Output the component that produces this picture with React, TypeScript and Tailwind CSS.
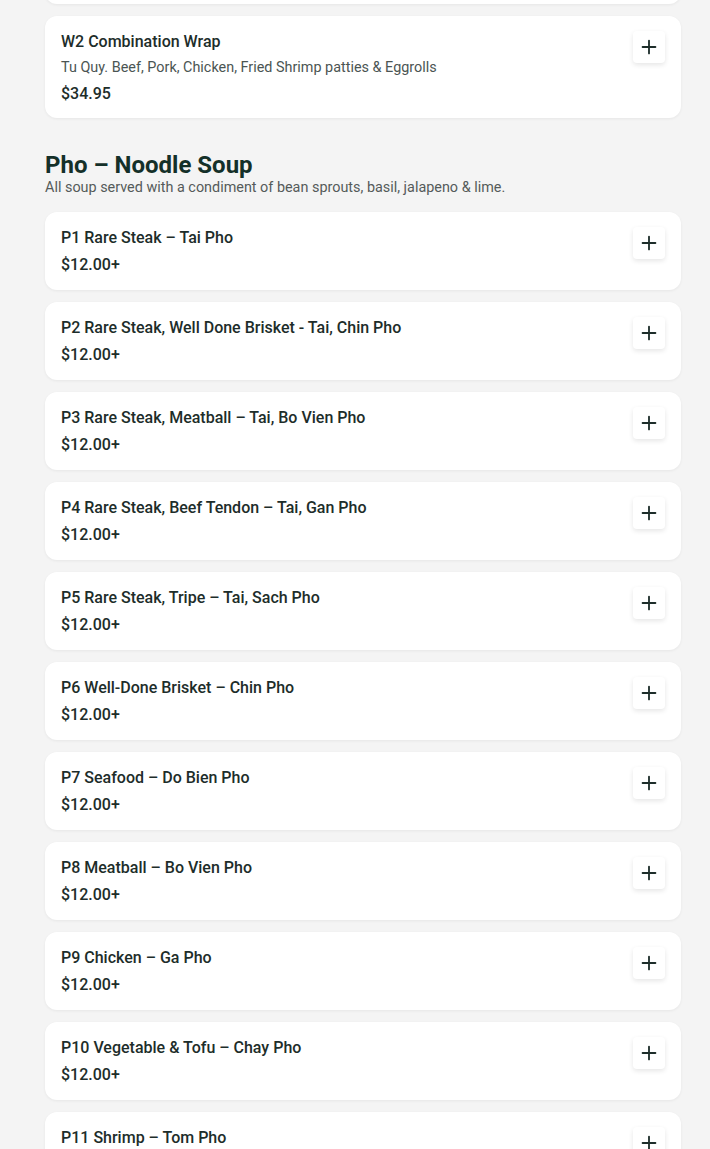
import { Plus } from 'lucide-react'

type Item = {
  name: string
  desc?: string
  price: string
}

const phoItems: Item[] = [
  { name: 'P1 Rare Steak – Tai Pho', price: '$12.00+' },
  { name: 'P2 Rare Steak, Well Done Brisket - Tai, Chin Pho', price: '$12.00+' },
  { name: 'P3 Rare Steak, Meatball – Tai, Bo Vien Pho', price: '$12.00+' },
  { name: 'P4 Rare Steak, Beef Tendon – Tai, Gan Pho', price: '$12.00+' },
  { name: 'P5 Rare Steak, Tripe – Tai, Sach Pho', price: '$12.00+' },
  { name: 'P6 Well-Done Brisket – Chin Pho', price: '$12.00+' },
  { name: 'P7 Seafood – Do Bien Pho', price: '$12.00+' },
  { name: 'P8 Meatball – Bo Vien Pho', price: '$12.00+' },
  { name: 'P9 Chicken – Ga Pho', price: '$12.00+' },
  { name: 'P10 Vegetable & Tofu – Chay Pho', price: '$12.00+' },
  { name: 'P11 Shrimp – Tom Pho', price: '$12.00+' },
]

function ItemCard({ item }: { item: Item }) {
  // cards with a description sit a touch tighter at the bottom
  const cardCls = item.desc
    ? 'flex items-start justify-between rounded-xl bg-white px-4 pt-[14px] pb-[12px] shadow-[0_1px_3px_rgba(0,0,0,0.06)]'
    : 'flex items-start justify-between rounded-xl bg-white px-4 pt-[14px] pb-[13px] shadow-[0_1px_3px_rgba(0,0,0,0.06)]'

  return (
    <div className={cardCls}>
      <div className="flex flex-col">
        <div className="text-base leading-6 font-medium text-[#1d2d2a]">{item.name}</div>
        {item.desc && (
          <div className="mt-[4px] text-[14.4px] leading-5 text-[#4b5553]">{item.desc}</div>
        )}
        <div
          className={
            item.desc
              ? 'mt-[4px] text-base leading-6 font-medium text-[#1d2d2a]'
              : 'mt-[3px] text-base leading-6 font-medium text-[#1d2d2a]'
          }
        >
          {item.price}
        </div>
      </div>
      <button className="mt-[1px] flex h-8 w-8 shrink-0 items-center justify-center rounded bg-white text-[#1d2d2a] shadow-[0_2px_5px_rgba(0,0,0,0.1)]">
        <Plus size={22} strokeWidth={2} />
      </button>
    </div>
  )
}

export default function App() {
  return (
    <div
      className="h-[1149px] overflow-hidden bg-[#f4f4f4] pl-[45px] pr-[29px]"
      style={{ fontFamily: 'Roboto, "Noto Sans", sans-serif' }}
    >
      <div className="-mt-[60px] flex flex-col gap-3">
        <div className="h-[64px] rounded-xl bg-white shadow-[0_1px_3px_rgba(0,0,0,0.06)]" />
        <ItemCard
          item={{
            name: 'W2 Combination Wrap',
            desc: 'Tu Quy. Beef, Pork, Chicken, Fried Shrimp patties & Eggrolls',
            price: '$34.95',
          }}
        />
      </div>

      <div className="mt-[35px]">
        <h2 className="text-2xl leading-[25px] font-bold text-[#143029]">Pho – Noodle Soup</h2>
        <p className="text-[14.4px] leading-5 text-[#555b5a]">
          All soup served with a condiment of bean sprouts, basil, jalapeno & lime.
        </p>
      </div>

      <div className="mt-[14px] flex flex-col gap-3">
        {phoItems.map((it) => (
          <ItemCard key={it.name} item={it} />
        ))}
      </div>
    </div>
  )
}
